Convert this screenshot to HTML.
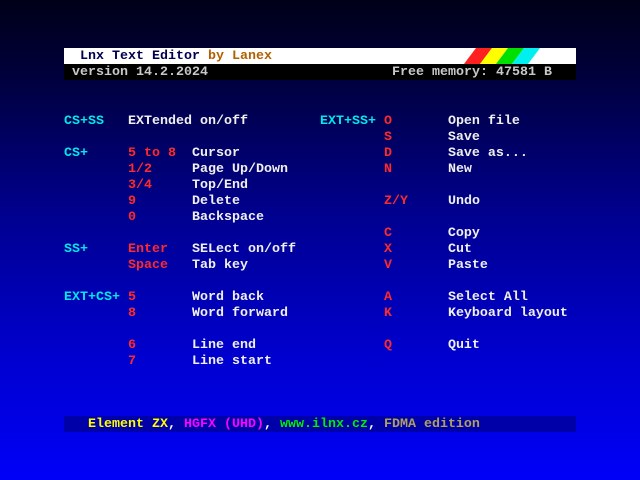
<!DOCTYPE html>
<html><head><meta charset="utf-8"><style>
html,body{margin:0;padding:0}
body{width:640px;height:480px;overflow:hidden;position:relative;background:linear-gradient(to bottom,#000018 0%,#00003a 15%,#000090 45%,#0000d0 75%,#0000f8 100%);font-family:"Liberation Mono",monospace;font-weight:bold;font-size:13.33px;}
.t{position:absolute;white-space:pre;line-height:16px;height:16px;padding-top:2px;}
.c{color:#00e8e8}.r{color:#ff2a2a}.w{color:#f0f0f0}
pre{margin:0;position:absolute;left:64px;top:114px;font:inherit;line-height:16px;color:#f0f0f0}
</style></head><body>
<div style="position:absolute;left:64px;top:48px;width:512px;height:16px;background:#fff"></div>
<svg style="position:absolute;left:0;top:48px" width="640" height="16"><polygon points="464,16 480,16 492,0 476,0" fill="#ff2020"/><polygon points="480,16 496,16 508,0 492,0" fill="#ffff00"/><polygon points="496,16 512,16 524,0 508,0" fill="#00e000"/><polygon points="512,16 528,16 540,0 524,0" fill="#00f0f0"/></svg>
<div style="position:absolute;left:64px;top:64px;width:512px;height:16px;background:#000"></div>
<div class="t" style="left:80px;top:47px;color:#000050">Lnx Text Editor <span style="color:#b06000">by Lanex</span></div>
<div class="t" style="left:72px;top:63px;color:#c8c8c8">version 14.2.2024</div>
<div class="t" style="left:392px;top:63px;color:#c8c8c8">Free memory: 47581 B</div>
<pre><span class="c">CS+SS</span>   EXTended on/off         <span class="c">EXT+SS+</span> <span class="r">O</span>       Open file
                                        <span class="r">S</span>       Save
<span class="c">CS+</span>     <span class="r">5 to 8</span>  Cursor                  <span class="r">D</span>       Save as...
        <span class="r">1/2</span>     Page Up/Down            <span class="r">N</span>       New
        <span class="r">3/4</span>     Top/End
        <span class="r">9</span>       Delete                  <span class="r">Z/Y</span>     Undo
        <span class="r">0</span>       Backspace
                                        <span class="r">C</span>       Copy
<span class="c">SS+</span>     <span class="r">Enter</span>   SELect on/off           <span class="r">X</span>       Cut
        <span class="r">Space</span>   Tab key                 <span class="r">V</span>       Paste

<span class="c">EXT+CS+</span> <span class="r">5</span>       Word back               <span class="r">A</span>       Select All
        <span class="r">8</span>       Word forward            <span class="r">K</span>       Keyboard layout

        <span class="r">6</span>       Line end                <span class="r">Q</span>       Quit
        <span class="r">7</span>       Line start</pre>
<div style="position:absolute;left:64px;top:416px;width:512px;height:16px;background:#0000a8"></div>
<div class="t" style="left:88px;top:415px;color:#fff"><span style="color:#ffff00">Element ZX</span>, <span style="color:#ff00ff">HGFX (UHD)</span>, <span style="color:#00ee00">www.ilnx.cz</span>, <span style="color:#b0a060">FDMA edition</span></div>
</body></html>
